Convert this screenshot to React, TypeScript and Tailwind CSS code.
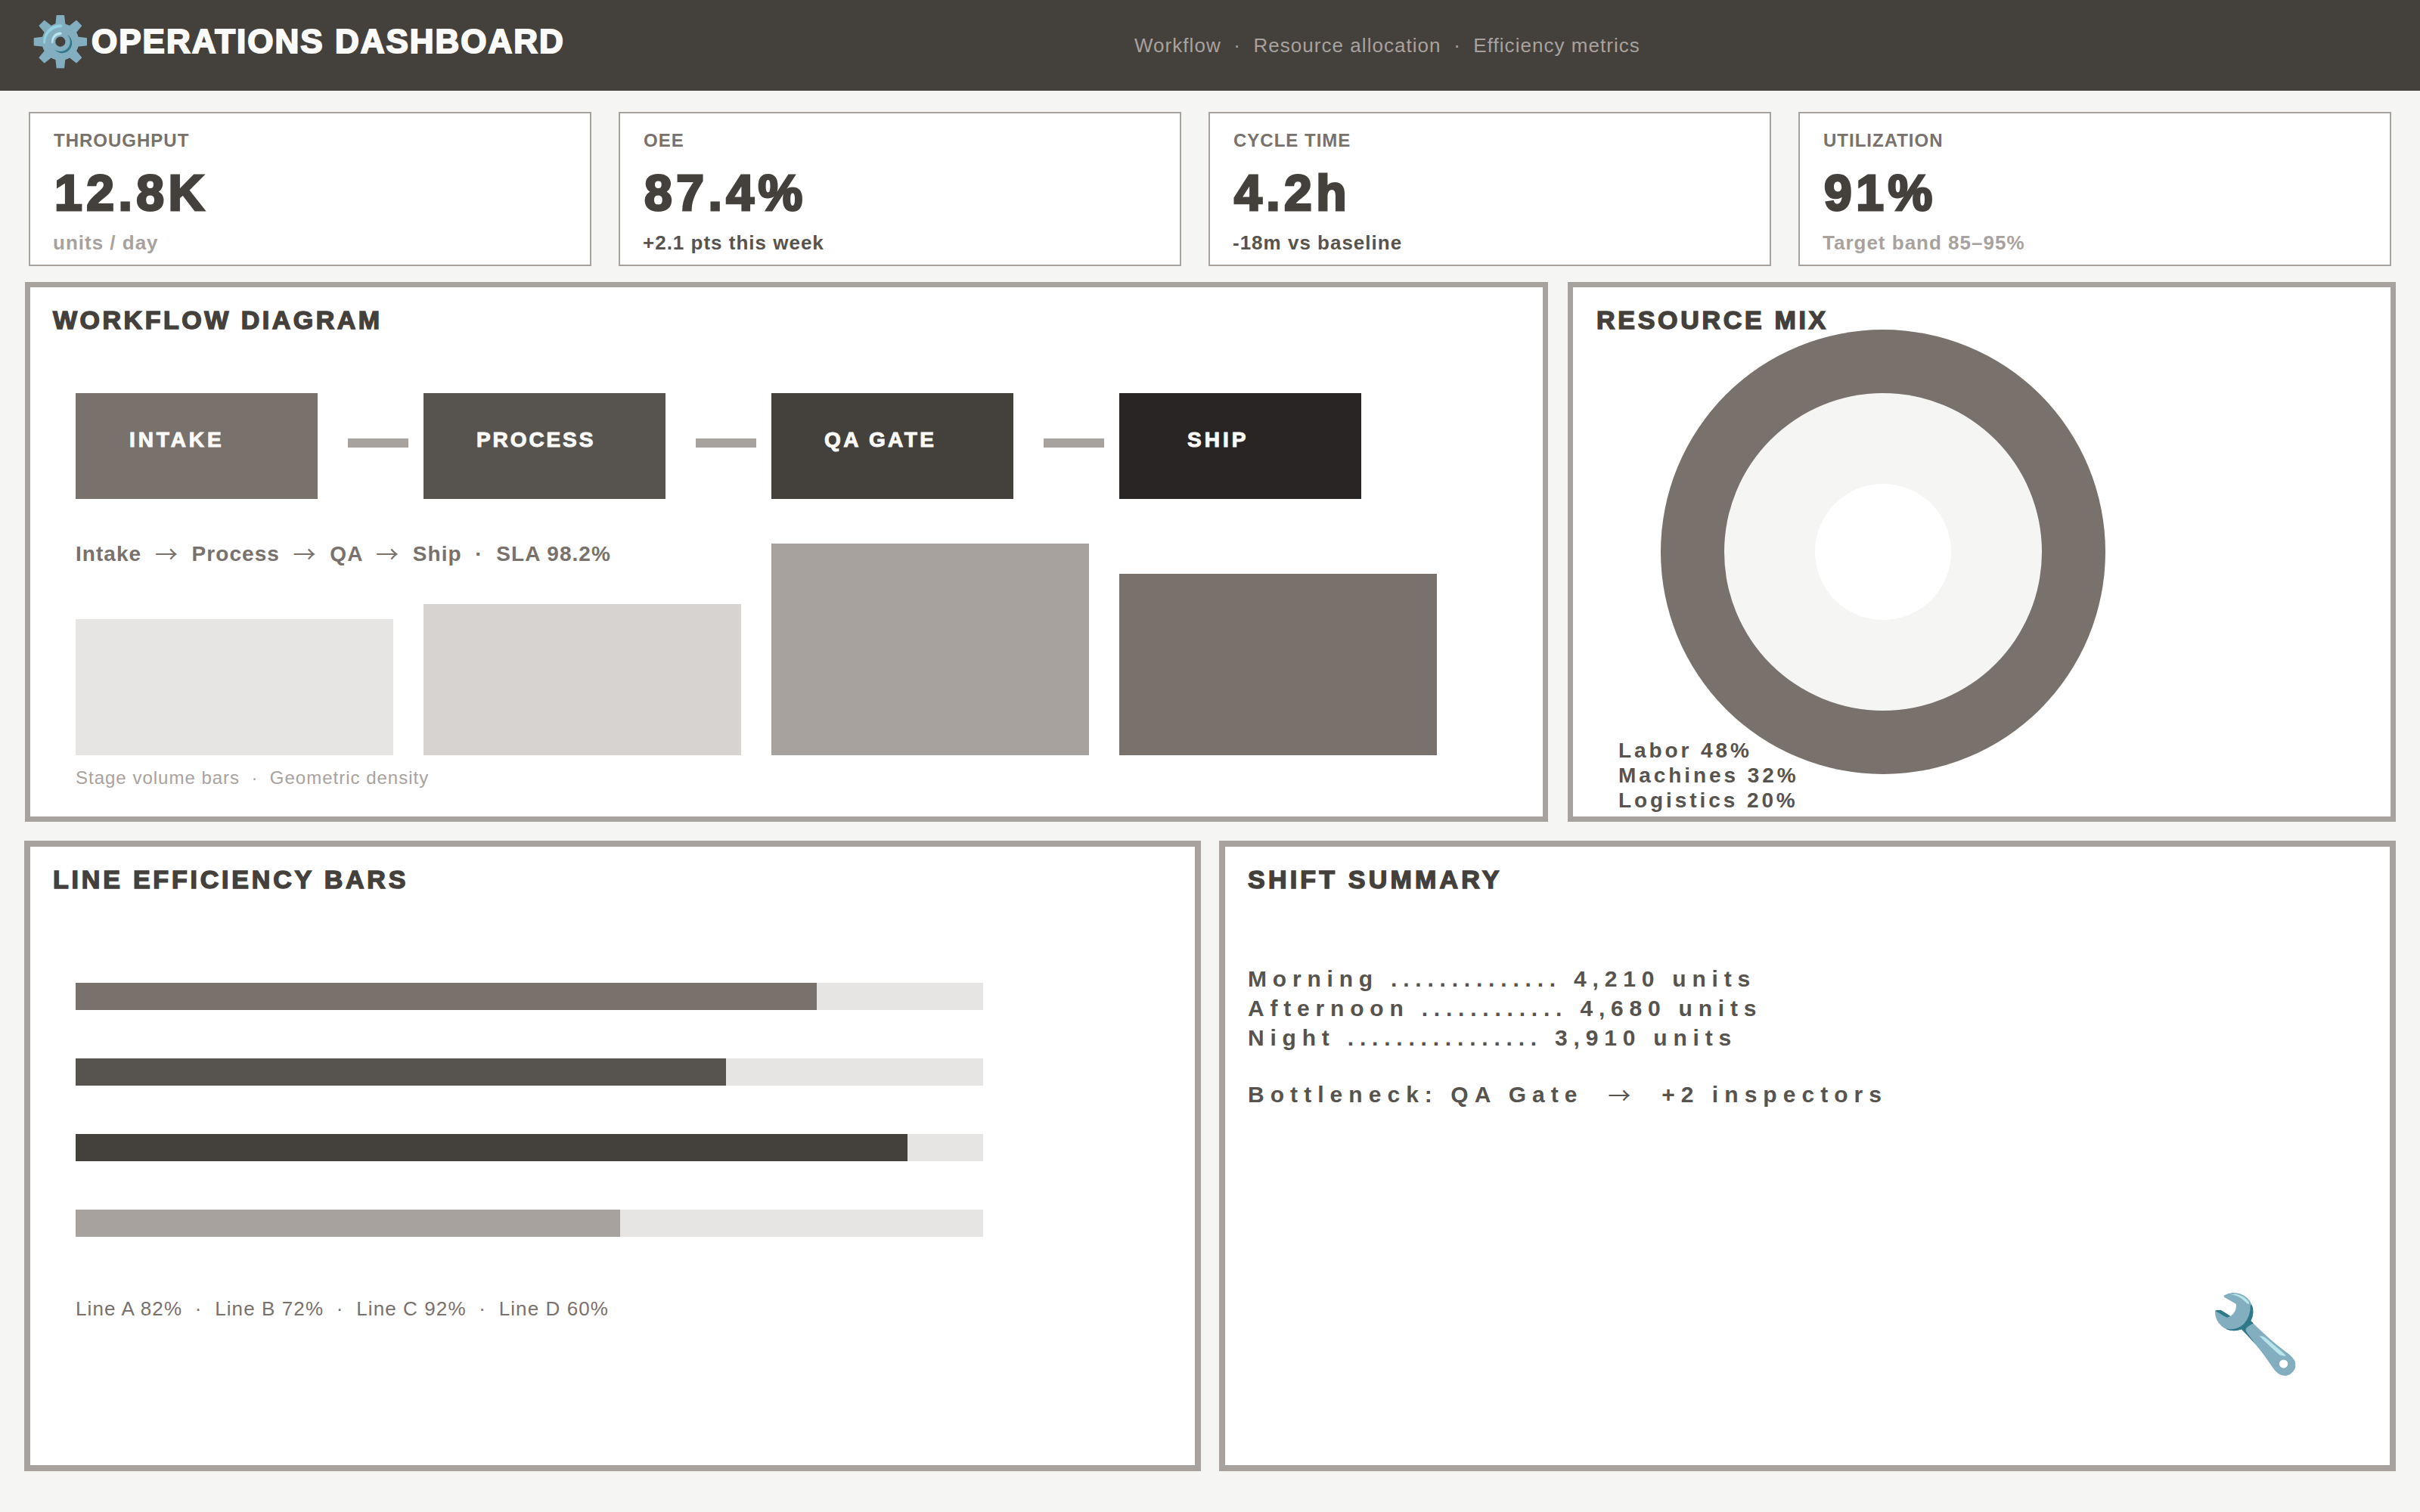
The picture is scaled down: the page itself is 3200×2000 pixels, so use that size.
const kpis = [
  { label: "THROUGHPUT", value: "12.8K", note: "units / day", noteTone: "text-[#a8a29e]", width: "w-[744px]" },
  { label: "OEE", value: "87.4%", note: "+2.1 pts this week", noteTone: "text-[#57534e]", width: "w-[744px]" },
  { label: "CYCLE TIME", value: "4.2h", note: "-18m vs baseline", noteTone: "text-[#57534e]", width: "w-[744px]" },
  { label: "UTILIZATION", value: "91%", note: "Target band 85–95%", noteTone: "text-[#a8a29e]", width: "w-[784px]" },
];

const stages = [
  { name: "INTAKE", tone: "bg-[#78716c] pl-[71px] tracking-[3.9px]" },
  { name: "PROCESS", tone: "bg-[#57534e] pl-[70px] tracking-[2.9px]" },
  { name: "QA GATE", tone: "bg-[#44403c] pl-[70px] tracking-[3.4px]" },
  { name: "SHIP", tone: "bg-[#292524] pl-[90px] tracking-[4px]" },
];

const volumes = [
  { height: "h-[180px]", tone: "bg-[#e7e5e4]" },
  { height: "h-[200px]", tone: "bg-[#d6d3d1]" },
  { height: "h-[280px]", tone: "bg-[#a8a29e]" },
  { height: "h-[240px]", tone: "bg-[#78716c]" },
];

const lines = [
  { width: "w-[980px]", tone: "bg-[#78716c]" },
  { width: "w-[860px]", tone: "bg-[#57534e]" },
  { width: "w-[1100px]", tone: "bg-[#44403c]" },
  { width: "w-[720px]", tone: "bg-[#a8a29e]" },
];

function Arrow() {
  return <span className="align-[-2px] font-['Noto_Sans_CJK_SC',serif] text-[30px] leading-none font-normal">→</span>;
}

function PanelTitle({ children, tracking }: { children: string; tracking: string }) {
  return (
    <h2 className={`text-[34px] leading-[40px] font-black text-[#44403c] [-webkit-text-stroke:1.5px_#44403c] ${tracking}`}>
      {children}
    </h2>
  );
}

export default function App() {
  return (
    <div className="flex h-[2000px] w-[3200px] flex-col bg-[#f5f5f4] font-['Liberation_Sans',Arial,sans-serif]">
      <header className="flex h-[120px] shrink-0 items-center bg-[#44403c] pl-[40px]">
        <div className="flex w-[1460px] items-center pb-[10px] text-[44px] leading-[56px] font-black tracking-[2px] text-[#fafaf9] [-webkit-text-stroke:2px_#fafaf9]">
          <span className="text-[64px] tracking-normal [-webkit-text-stroke:0]">⚙️</span>
          <span className="ml-[1px]">OPERATIONS DASHBOARD</span>
        </div>
        <nav className="text-[26px] tracking-[1.04px] text-[#a8a29e]">
          Workflow &nbsp;·&nbsp; Resource allocation &nbsp;·&nbsp; Efficiency metrics
        </nav>
      </header>

      <main className="flex flex-1 flex-col px-[32px]">
        {/* kpi strip */}
        <div className="mt-[28px] flex gap-[36px] pl-[6px]">
          {kpis.map((k) => (
            <div key={k.label} className={`h-[204px] ${k.width} border-2 border-[#a8a29e] bg-white px-[30px] pt-[22px]`}>
              <div className="pl-[1px] text-[24px] leading-[28px] font-bold tracking-[1px] text-[#78716c]">{k.label}</div>
              <div className="mt-[15px] -mb-[1px] pl-[2px] text-[66px] leading-[80px] font-black tracking-[5.5px] text-[#44403c] [-webkit-text-stroke:3px_#44403c]">
                {k.value}
              </div>
              <div className={`mt-[12px] text-[26px] leading-[30px] font-bold tracking-[1px] ${k.noteTone}`}>{k.note}</div>
            </div>
          ))}
        </div>

        {/* diagram row */}
        <div className="mt-[21px] flex gap-[26px] pl-[1px]">
          <section className="h-[714px] w-[2014px] border-[7px] border-[#a8a29e] bg-white pt-[23px] pl-[30px]">
            <PanelTitle tracking="tracking-[3.5px]">WORKFLOW DIAGRAM</PanelTitle>
            <div className="mt-[77px] ml-[30px]">
              <div className="flex items-start">
                {stages.map((s, i) => (
                  <div key={s.name} className="flex items-start">
                    {i > 0 && <div className="mt-[60px] mr-[20px] ml-[40px] h-[12px] w-[80px] bg-[#a8a29e]" />}
                    <div className={`h-[140px] w-[320px] ${s.tone} pt-[44px] text-[28px] leading-[36px] font-black text-[#fafaf9] [-webkit-text-stroke:1px_#fafaf9]`}>
                      {s.name}
                    </div>
                  </div>
                ))}
              </div>
              <div className="mt-[56px] h-[32px] text-[28px] leading-[32px] font-bold tracking-[1.05px] text-[#78716c]">
                Intake &nbsp;<Arrow />&nbsp; Process &nbsp;<Arrow />&nbsp; QA &nbsp;<Arrow />&nbsp; Ship &nbsp;·&nbsp; SLA 98.2%
              </div>
              {/* tallest bar rises alongside the caption line above */}
              <div className="-mt-[29px] flex items-end gap-[40px]">
                {volumes.map((v) => (
                  <div key={v.height} className={`w-[420px] ${v.height} ${v.tone}`} />
                ))}
              </div>
              <div className="mt-[16px] text-[24px] leading-[28px] tracking-[1px] text-[#a8a29e]">
                Stage volume bars &nbsp;·&nbsp; Geometric density
              </div>
            </div>
          </section>

          <section className="relative h-[714px] w-[1095px] border-[7px] border-[#a8a29e] bg-white pt-[23px] pl-[31px]">
            <PanelTitle tracking="tracking-[3.7px]">RESOURCE MIX</PanelTitle>
            <div className="absolute top-[56px] left-[116px] flex h-[588px] w-[588px] items-center justify-center rounded-full bg-[#78716c]">
              <div className="flex h-[420px] w-[420px] items-center justify-center rounded-full bg-[#f5f5f4]">
                <div className="h-[180px] w-[180px] rounded-full bg-white" />
              </div>
            </div>
            <div className="absolute top-[596px] left-[60px] text-[28px] leading-[33px] font-bold tracking-[3.92px] text-[#57534e]">
              <div>Labor 48%</div>
              <div>Machines 32%</div>
              <div>Logistics 20%</div>
            </div>
          </section>
        </div>

        {/* bottom row */}
        <div className="mt-[25px] flex gap-[24px]">
          <section className="h-[834px] w-[1556px] border-[8px] border-[#a8a29e] bg-white pt-[23px] pl-[30px]">
            <PanelTitle tracking="tracking-[3.8px]">LINE EFFICIENCY BARS</PanelTitle>
            <div className="mt-[117px] ml-[30px] flex flex-col gap-[64px]">
              {lines.map((l) => (
                <div key={l.width} className="h-[36px] w-[1200px] bg-[#e7e5e4]">
                  <div className={`h-full ${l.width} ${l.tone}`} />
                </div>
              ))}
            </div>
            <div className="mt-[80px] ml-[30px] text-[26px] leading-[30px] tracking-[1.1px] text-[#78716c]">
              Line A 82% &nbsp;·&nbsp; Line B 72% &nbsp;·&nbsp; Line C 92% &nbsp;·&nbsp; Line D 60%
            </div>
          </section>

          <section className="relative h-[834px] w-[1556px] border-[8px] border-[#a8a29e] bg-white pt-[23px] pl-[30px]">
            <PanelTitle tracking="tracking-[4.2px]">SHIFT SUMMARY</PanelTitle>
            <div className="mt-[92px] text-[30px] leading-[39px] font-bold tracking-[7.8px] text-[#57534e]">
              <div>Morning .............. 4,210 units</div>
              <div>Afternoon ............ 4,680 units</div>
              <div>Night ................ 3,910 units</div>
              <div className="mt-[36px] h-[39px] tracking-[8.05px]">Bottleneck: QA Gate &nbsp;<Arrow />&nbsp; +2 inspectors</div>
            </div>
            <div className="absolute top-[594px] left-[1300px] text-[100px] leading-none">🔧</div>
          </section>
        </div>
      </main>
    </div>
  );
}
